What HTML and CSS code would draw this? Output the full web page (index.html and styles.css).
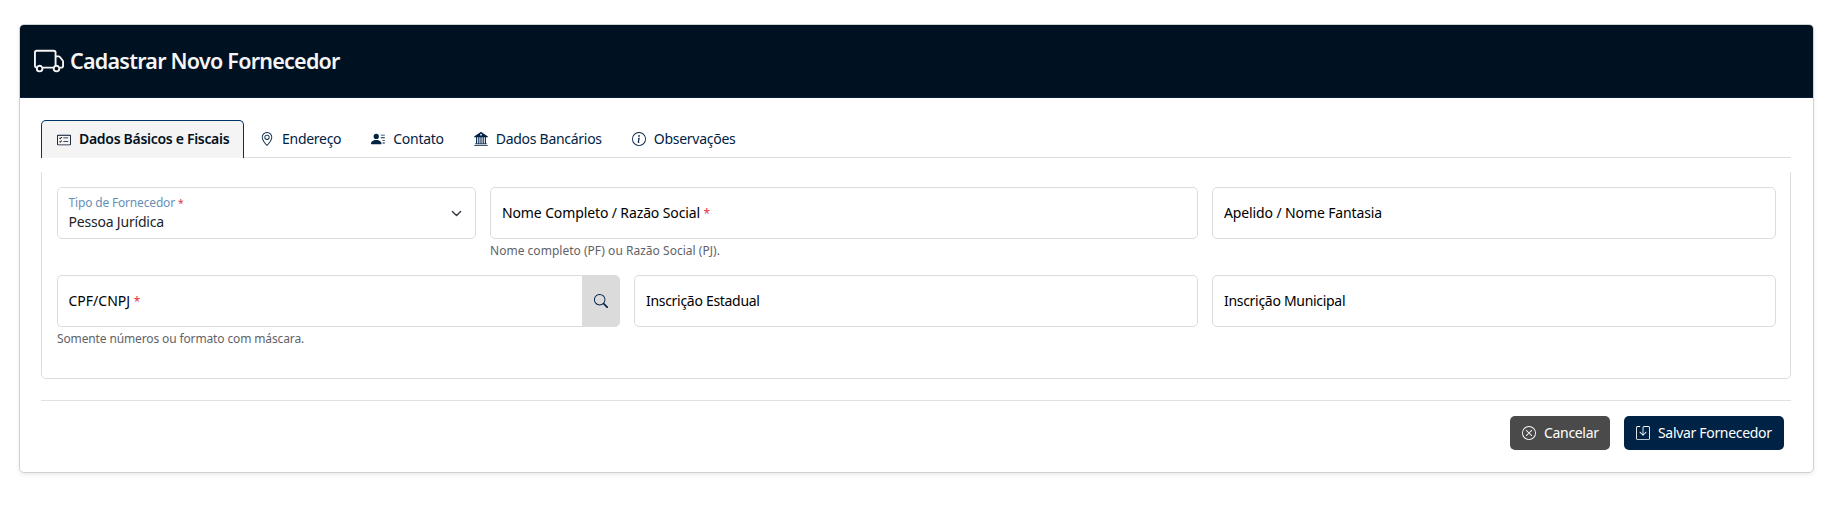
FILE: index.html
```html
<!DOCTYPE html>
<html lang="pt-BR">
<head>
<meta charset="utf-8">
<title>Cadastrar Novo Fornecedor</title>
<link rel="stylesheet" href="styles.css">
</head>
<body>
<main class="card">
  <header class="card-header">
    <svg class="truck" viewBox="0 0 16 16"><path d="M0 3.5A1.5 1.5 0 0 1 1.5 2h9A1.5 1.5 0 0 1 12 3.5V5h1.02a1.5 1.5 0 0 1 1.17.563l1.481 1.85a1.5 1.5 0 0 1 .329.938V10.500a1.500 1.500 0 0 1-1.500 1.500H14a2 2 0 1 1-4 0H5a2 2 0 1 1-3.998-.085A1.500 1.500 0 0 1 0 10.500zm1.294 7.456A2 2 0 0 1 4.732 11h5.536a2 2 0 0 1 .732-.732V3.500a.5.5 0 0 0-.5-.5h-9a.5.5 0 0 0-.5.5v7a.5.5 0 0 0 .294.456M12 10a2 2 0 0 1 1.732 1h.768a.5.5 0 0 0 .5-.5V8.350a.5.5 0 0 0-.11-.312l-1.480-1.850A.5.5 0 0 0 13.020 6H12zm-9 1a1 1 0 1 0 0 2 1 1 0 0 0 0-2m9 0a1 1 0 1 0 0 2 1 1 0 0 0 0-2"/></svg>
    <h1 class="title">Cadastrar Novo Fornecedor</h1>
  </header>
  <div class="card-body">
    <nav class="tabs">
      <a class="tab active"><svg class="icon" viewBox="0 0 16 16"><path d="M14.500 3a.5.5 0 0 1 .5.5v9a.5.5 0 0 1-.5.5h-13a.5.5 0 0 1-.5-.5v-9a.5.5 0 0 1 .5-.5zm-13-1A1.500 1.500 0 0 0 0 3.500v9A1.500 1.500 0 0 0 1.500 14h13a1.500 1.500 0 0 0 1.500-1.500v-9A1.500 1.500 0 0 0 14.500 2z"/><path d="M7 5.500a.5.5 0 0 1 .5-.5h5a.5.5 0 0 1 0 1h-5a.5.5 0 0 1-.5-.5m-1.496-.854a.5.5 0 0 1 0 .708l-1.500 1.500a.5.5 0 0 1-.708 0l-.5-.5a.5.5 0 1 1 .708-.708l.146.147 1.146-1.147a.5.5 0 0 1 .708 0M7 9.500a.5.5 0 0 1 .5-.5h5a.5.5 0 0 1 0 1h-5a.5.5 0 0 1-.5-.5m-1.496-.854a.5.5 0 0 1 0 .708l-1.500 1.500a.5.5 0 0 1-.708 0l-.5-.5a.5.5 0 0 1 .708-.708l.146.147 1.146-1.147a.5.5 0 0 1 .708 0"/></svg><span>Dados Básicos e Fiscais</span></a>
      <a class="tab"><svg class="icon" viewBox="0 0 16 16"><path d="M12.166 8.940c-.524 1.062-1.234 2.120-1.960 3.070A32 32 0 0 1 8 14.580a32 32 0 0 1-2.206-2.570c-.726-.950-1.436-2.008-1.960-3.070C3.304 7.867 3 6.862 3 6a5 5 0 0 1 10 0c0 .862-.305 1.867-.834 2.940M8 16s6-5.686 6-10A6 6 0 0 0 2 6c0 4.314 6 10 6 10"/><path d="M8 8a2 2 0 1 1 0-4 2 2 0 0 1 0 4m0 1a3 3 0 1 0 0-6 3 3 0 0 0 0 6"/></svg><span>Endereço</span></a>
      <a class="tab"><svg class="icon" viewBox="0 0 16 16"><path d="M6 8a3 3 0 1 0 0-6 3 3 0 0 0 0 6m-5 6s-1 0-1-1 1-4 6-4 6 3 6 4-1 1-1 1zM11 3.500a.5.5 0 0 1 .5-.5h4a.5.5 0 0 1 0 1h-4a.5.5 0 0 1-.5-.5m.5 2.500a.5.5 0 0 0 0 1h4a.5.5 0 0 0 0-1zm2 3a.5.5 0 0 0 0 1h2a.5.5 0 0 0 0-1zm0 3a.5.5 0 0 0 0 1h2a.5.5 0 0 0 0-1z"/></svg><span>Contato</span></a>
      <a class="tab"><svg class="icon" viewBox="0 0 16 16"><path d="M8.277.084a.5.5 0 0 0-.554 0l-7.500 5A.5.5 0 0 0 .5 6h1.875v7H1.500a.5.5 0 0 0 0 1h13a.5.5 0 1 0 0-1h-.875V6H15.500a.5.5 0 0 0 .277-.916zM12.375 6v7h-1.250V6zm-2.500 0v7h-1.250V6zm-2.500 0v7h-1.250V6zm-2.500 0v7h-1.250V6zM8 4a1 1 0 1 1 0-2 1 1 0 0 1 0 2M.5 15a.5.5 0 0 0 0 1h15a.5.5 0 1 0 0-1z"/></svg><span>Dados Bancários</span></a>
      <a class="tab"><svg class="icon" viewBox="0 0 16 16"><path d="M8 15A7 7 0 1 1 8 1a7 7 0 0 1 0 14m0 1A8 8 0 1 0 8 0a8 8 0 0 0 0 16"/><path d="m8.930 6.588-2.290.287-.082.380.450.083c.294.070.352.176.288.469l-.738 3.468c-.194.897.105 1.319.808 1.319.545 0 1.178-.252 1.465-.598l.088-.416c-.2.176-.492.246-.686.246-.275 0-.375-.193-.304-.533zM9 4.500a1 1 0 1 1-2 0 1 1 0 0 1 2 0"/></svg><span>Observações</span></a>
    </nav>
    <section class="pane">
      <div class="row row-one">
        <div class="col">
          <div class="field select">
            <div class="stack"><span class="float-label">Tipo de Fornecedor <i class="req">*</i></span><span class="value">Pessoa Jurídica</span></div>
            <svg class="chevron" viewBox="0 0 16 16"><path d="m2 5 6 6 6-6"/></svg>
          </div>
        </div>
        <div class="col">
          <div class="field"><span class="label">Nome Completo / Razão Social <i class="req">*</i></span></div>
          <small class="help help-name">Nome completo (PF) ou Razão Social (PJ).</small>
        </div>
        <div class="col">
          <div class="field"><span class="label">Apelido / Nome Fantasia</span></div>
        </div>
      </div>
      <div class="row row-two">
        <div class="col">
          <div class="group">
            <div class="field"><span class="label doc">CPF/CNPJ <i class="req">*</i></span></div>
            <button class="search"><svg class="icon" viewBox="0 0 16 16"><path d="M11.742 10.344a6.500 6.500 0 1 0-1.397 1.398h-.001q.044.060.098.115l3.850 3.850a1 1 0 0 0 1.415-1.414l-3.850-3.850a1 1 0 0 0-.115-.1zM12 6.500a5.500 5.500 0 1 1-11 0 5.500 5.500 0 0 1 11 0"/></svg></button>
          </div>
          <small class="help">Somente números ou formato com máscara.</small>
        </div>
        <div class="col">
          <div class="field"><span class="label state">Inscrição Estadual</span></div>
        </div>
        <div class="col">
          <div class="field"><span class="label state">Inscrição Municipal</span></div>
        </div>
      </div>
    </section>
    <footer class="actions">
      <button class="btn cancel"><svg class="icon" viewBox="0 0 16 16"><path d="M8 15A7 7 0 1 1 8 1a7 7 0 0 1 0 14m0 1A8 8 0 1 0 8 0a8 8 0 0 0 0 16"/><path d="M4.646 4.646a.5.5 0 0 1 .708 0L8 7.293l2.646-2.647a.5.5 0 0 1 .708.708L8.707 8l2.647 2.646a.5.5 0 0 1-.708.708L8 8.707l-2.646 2.647a.5.5 0 0 1-.708-.708L7.293 8 4.646 5.354a.5.5 0 0 1 0-.708"/></svg><span>Cancelar</span></button>
      <button class="btn save"><svg class="icon" viewBox="0 0 16 16"><path d="M2 1a1 1 0 0 0-1 1v12a1 1 0 0 0 1 1h12a1 1 0 0 0 1-1V2a1 1 0 0 0-1-1H9.500a1 1 0 0 0-1 1v7.293l2.646-2.647a.5.5 0 0 1 .708.708l-3.500 3.500a.5.5 0 0 1-.708 0l-3.500-3.500a.5.5 0 1 1 .708-.708L7.500 9.293V2a2 2 0 0 1 2-2H14a2 2 0 0 1 2 2v12a2 2 0 0 1-2 2H2a2 2 0 0 1-2-2V2a2 2 0 0 1 2-2h2.500a.5.5 0 0 1 0 1z"/></svg><span>Salvar Fornecedor</span></button>
    </footer>
  </div>
</main>
</body>
</html>
```
FILE: styles.css
```css
* { box-sizing: border-box; }
body {
  margin: 0;
  padding: 24px 18px 35px 19px;
  background: #fff;
  font: 14px/21px "Noto Sans", "Open Sans", sans-serif;
  color: #212529;
}
svg { fill: currentColor; flex: none; }
span, small { white-space: nowrap; }
.card {
  height: 449px;
  border: 1px solid #cfd1d3;
  border-radius: 5px;
  box-shadow: 0 2px 4px rgba(0, 0, 0, .075);
  overflow: hidden;
}
.card-header {
  display: flex;
  align-items: center;
  gap: 6px;
  height: 73px;
  padding: 0 14px;
  background: #001122;
  border-bottom: 1px solid #06203c;
  color: #f5f5f5;
}
.truck { width: 30px; height: 30px; }
.title {
  margin: 0;
  font-size: 21.5px;
  line-height: 28px;
  font-weight: 600;
  letter-spacing: -.75px;
}
.card-body { padding: 22px 22px 0 21px; }
.tabs { display: flex; height: 38px; border-bottom: 1px solid #dbdcde; }
.tab {
  display: flex;
  align-items: center;
  gap: 8px;
  height: 38px;
  padding: 0 15px;
  color: #002244;
  letter-spacing: -.28px;
}
.tab span, .btn span { padding-bottom: 1px; }
.tab.active + .tab { padding-left: 16px; }
.icon { width: 14px; height: 14px; }
.tab.active {
  width: 203px;
  border: 1px solid #003366;
  border-bottom: 0;
  border-radius: 5px 5px 0 0;
  background: #f4f4f4;
  color: #001122;
  font-weight: 600;
  letter-spacing: -.3px;
}
.tab.active span { padding-bottom: 3px; }
.pane {
  height: 207px;
  margin-top: 14px;
  padding: 15px 14px 0 15px;
  border: 1px solid #dbdcde;
  border-top: 0;
  border-radius: 0 0 5px 5px;
}
.row { display: grid; column-gap: 14px; height: 88px; }
.row-one { grid-template-columns: 419px 708px 564px; }
.row-two { grid-template-columns: 563px 564px 564px; }
.field {
  display: flex;
  align-items: center;
  flex: 1;
  height: 52px;
  padding: 0 11px;
  border: 1px solid #dbdcde;
  border-radius: 5px;
  background: #fff;
}
.label { padding-bottom: 1px; color: #000; letter-spacing: -.12px; }
.label.doc { letter-spacing: 0; }
.label.state { letter-spacing: -.3px; }
.req { color: #dc3545; font-size: .85em; font-style: normal; }
.select { justify-content: space-between; padding-left: 10.5px; }
.group .field { padding-left: 10.5px; }
.stack { display: flex; flex-direction: column; padding-bottom: 3px; }
.float-label { font-size: 12px; line-height: 19px; color: #668fb8; letter-spacing: -.17px; }
.value { line-height: 17px; letter-spacing: -.2px; }
.chevron {
  width: 11px;
  height: 11px;
  margin-right: 2px;
  fill: none;
  stroke: #343a40;
  stroke-width: 2;
  stroke-linecap: round;
  stroke-linejoin: round;
}
.help {
  display: block;
  margin-top: 3px;
  font-size: 12px;
  line-height: 18px;
  color: #5f6368;
  letter-spacing: -.13px;
}
.help-name { letter-spacing: .02px; }
.group { display: flex; }
.group .field { border-right: 0; border-radius: 5px 0 0 5px; }
.search {
  display: grid;
  place-items: center;
  width: 38px;
  padding: 0;
  border: 1px solid #dbdcde;
  border-radius: 0 5px 5px 0;
  background: #dbdbdb;
  color: #002244;
}
.actions {
  display: flex;
  justify-content: flex-end;
  gap: 14px;
  margin-top: 21px;
  padding: 15px 7px 0;
  border-top: 1px solid #dee2e6;
}
.btn {
  display: flex;
  align-items: center;
  gap: 8px;
  height: 34px;
  padding: 0 12px;
  border: 0;
  border-radius: 5px;
  color: #fff;
  font: inherit;
  letter-spacing: -.32px;
}
.cancel { width: 100px; background: #4a4a4a; }
.save { width: 160px; background: #002244; }
```
